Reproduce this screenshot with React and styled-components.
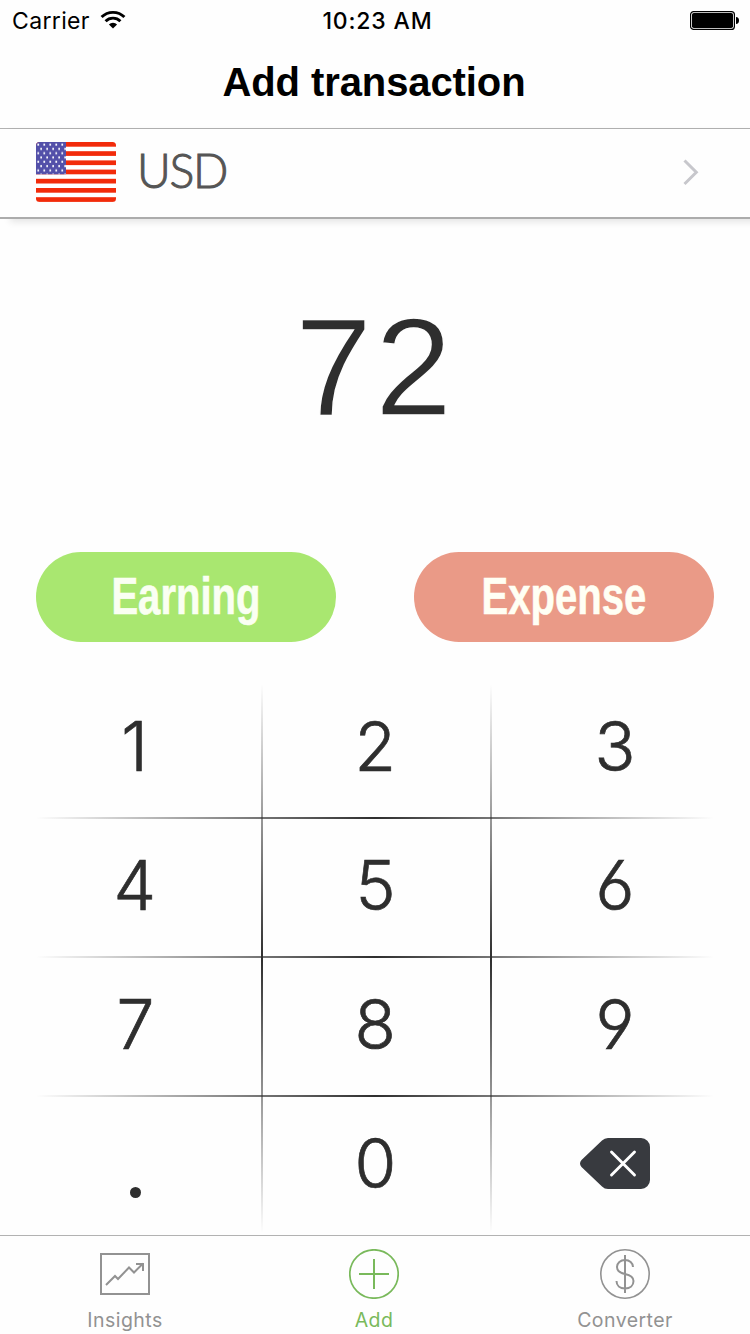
import React from "react";
import styled, { createGlobalStyle } from "styled-components";

const GlobalStyle = createGlobalStyle`
  * { box-sizing: border-box; }
  body { margin: 0; background: #fefefe; }
`;

const Screen = styled.div`
  width: 750px;
  height: 1334px;
  display: flex;
  flex-direction: column;
  overflow: hidden;
  background: #fefefe;
  font-family: Inter, "Liberation Sans", sans-serif;
`;

const StatusBar = styled.header`
  display: grid;
  grid-template-columns: 1fr auto 1fr;
  align-items: center;
  height: 40px;
  padding: 0 11px 0 12px;
  font-size: 23px;
  color: #000;
`;

const Carrier = styled.div`
  display: flex;
  align-items: center;
  gap: 10px;
  padding-top: 1px;
  letter-spacing: 0.35px;
  svg { margin-top: -2px; }
`;

const Clock = styled.time`
  font-weight: 500;
  letter-spacing: 0.85px;
  padding: 1px 0 0 4px;
`;

const Battery = styled.svg`
  justify-self: end;
`;

const NavBar = styled.div`
  height: 89px;
  display: flex;
  align-items: center;
  justify-content: center;
  border-bottom: 1px solid #b2b2b2;
`;

const Title = styled.h1`
  margin: 0;
  padding: 0 2px 4px 0;
  font: 700 40px/48px "Liberation Sans", sans-serif;
  letter-spacing: -0.1px;
  color: #000;
`;

const CurrencyRow = styled.button`
  display: flex;
  align-items: center;
  flex: none;
  width: 100%;
  height: 90px;
  padding: 0 50px 2px 36px;
  border: 0;
  border-bottom: 2px solid #acacac;
  background: #fefefe;
  box-shadow: 10px 3px 7px rgba(0, 0, 0, 0.1);
`;

const Code = styled.span`
  flex: 1;
  padding: 0 0 5px 21px;
  text-align: left;
  font: 300 46.5px/60px Lato, sans-serif;
  letter-spacing: -1.4px;
  -webkit-text-stroke: 1px #555;
  color: #555;
`;

const Amount = styled.output`
  flex: none;
  height: 333px;
  display: flex;
  align-items: center;
  justify-content: center;
  padding-bottom: 38px;
  font: 400 138.5px/160px "Liberation Sans", sans-serif;
  letter-spacing: 3px;
  color: #2e2e2e;
  -webkit-text-stroke: 1.4px #fefefe;
`;

const Actions = styled.div`
  display: flex;
  justify-content: space-between;
  flex: none;
  height: 90px;
  padding: 0 36px;
`;

const Pill = styled.button`
  width: 300px;
  border: 0;
  border-radius: 45px;
  background: ${(p) => p.$fill};
  color: ${(p) => p.$ink};
  font: 700 51px/90px "Liberation Sans", sans-serif;
  padding: 0;
`;

const Condensed = styled.span`
  display: inline-block;
  transform: scaleX(0.785);
  -webkit-text-stroke: 0.6px currentColor;
`;

const fade = "transparent, #2e2e2e 50%, transparent";

const Keypad = styled.div`
  flex: none;
  display: grid;
  grid-template-columns: repeat(3, 240px);
  grid-template-rows: repeat(4, 139px);
  margin-top: 36px;
  padding: 0 15px;
  height: 557px;
  background-image:
    linear-gradient(90deg, ${fade}),
    linear-gradient(90deg, ${fade}),
    linear-gradient(90deg, ${fade}),
    linear-gradient(${fade}),
    linear-gradient(${fade});
  background-size: 678px 2px, 678px 2px, 678px 2px, 2px 549px, 2px 549px;
  background-position: 36px 139px, 36px 278px, 36px 417px, 261px 6px, 489.5px 6px;
  background-repeat: no-repeat;
`;

const Key = styled.button`
  display: flex;
  align-items: center;
  justify-content: center;
  border: 0;
  padding: 0 0 2px;
  background: none;
  color: #2e2e2e;
  font: 300 69px/137px Inter, sans-serif;
  font-feature-settings: "cv03", "cv04";
  -webkit-text-stroke: 0.7px #2e2e2e;
`;

const Digit = styled.span`
  transform: scaleX(0.98);
`;

const Dot = styled.span`
  width: 11px;
  height: 11px;
  margin-top: 58px;
  border-radius: 50%;
  background: #2e2e2e;
`;

const TabBar = styled.nav`
  flex: 1;
  display: grid;
  grid-template-columns: 250px 248px 254px;
  border-top: 1px solid #b2b2b2;
`;

const Tab = styled.a`
  display: flex;
  flex-direction: column;
  align-items: center;
  padding-top: 13px;
  color: ${(p) => (p.$active ? "#79b95b" : "#929292")};
  font-size: 19.5px;
  line-height: 24px;
  letter-spacing: 0.45px;
  svg { margin-bottom: 9px; }
`;

const stripes = [0, 1, 2, 3, 4, 5, 6];

function Flag() {
  return (
    <svg width="80" height="60" viewBox="0 0 80 60">
      <defs>
        <clipPath id="flag-shape"><rect width="80" height="60" rx="3.5" /></clipPath>
        <pattern id="stars" width="6" height="8.6" patternUnits="userSpaceOnUse">
          <rect x="1.4" y="1.6" width="1.7" height="2" fill="#fff" />
          <rect x="4.3" y="5.9" width="1.7" height="2" fill="#fff" />
        </pattern>
      </defs>
      <g clipPath="url(#flag-shape)">
        <rect width="80" height="60" fill="#fff" />
        {stripes.map((i) => (
          <rect key={i} y={i * 9.2} width="80" height="4.7" fill="#f22b0a" />
        ))}
        <rect width="30" height="32.3" fill="#5350a9" />
        <rect width="30" height="32.3" fill="url(#stars)" />
      </g>
    </svg>
  );
}

function Wifi() {
  return (
    <svg width="26" height="19" viewBox="0 0 26 19" fill="none" stroke="#000" strokeWidth="2.9">
      <path d="M1.6 7.1a16 16 0 0 1 22.8 0" />
      <path d="M5.6 11.2a10.5 10.5 0 0 1 14.8 0" />
      <path d="M13 18.6 8.9 14.5a5.8 5.8 0 0 1 8.2 0z" fill="#000" stroke="none" />
    </svg>
  );
}

export default function App() {
  return (
    <>
      <GlobalStyle />
      <Screen>
        <StatusBar>
          <Carrier>Carrier <Wifi /></Carrier>
          <Clock>10:23 AM</Clock>
          <Battery width="49" height="19" viewBox="0 0 49 19">
            <rect x="0.6" y="0.6" width="43.8" height="17.8" rx="3" fill="#fff" stroke="#000" strokeWidth="1.2" />
            <rect x="2" y="2" width="41" height="15" rx="1.8" />
            <path d="M46 6c2 0 3 1.5 3 3.5S48 13 46 13z" />
          </Battery>
        </StatusBar>
        <NavBar><Title>Add transaction</Title></NavBar>
        <CurrencyRow>
          <Flag />
          <Code>USD</Code>
          <svg width="18" height="28" viewBox="0 0 18 28" fill="none" stroke="#c7c7cc" strokeWidth="3">
            <path d="m2.5 2.5 11.8 11.8L2.5 26" />
          </svg>
        </CurrencyRow>
        <Amount>72</Amount>
        <Actions>
          <Pill $fill="#a9e770" $ink="#fafff2"><Condensed>Earning</Condensed></Pill>
          <Pill $fill="#ea9a87" $ink="#fffff4"><Condensed>Expense</Condensed></Pill>
        </Actions>
        <Keypad>
          {[1, 2, 3, 4, 5, 6, 7, 8, 9].map((n) => <Key key={n}><Digit>{n}</Digit></Key>)}
          <Key aria-label="Decimal point"><Dot /></Key>
          <Key><Digit>0</Digit></Key>
          <Key aria-label="Erase">
            <svg width="70" height="51" viewBox="0 0 70 51">
              <path d="M28 0h33a9 9 0 0 1 9 9v33a9 9 0 0 1-9 9H28q-3.500 0-6-2.500L1.500 29q-3-3.500 0-7L22 2.500Q24.500 0 28 0z" fill="#383a3f" />
              <path d="m31.500 14 23 23m0-23-23 23" stroke="#fff" strokeWidth="2.900" strokeLinecap="round" />
            </svg>
          </Key>
        </Keypad>
        <TabBar>
          <Tab>
            <svg width="50" height="50" viewBox="0 0 50 50" fill="none" stroke="currentColor" strokeWidth="2">
              <rect x="1" y="5" width="48" height="40" />
              <path d="M6 36l9-9 3 3L29 18.500l5 5L43 14.500M36 15h7v7" />
            </svg>
            Insights
          </Tab>
          <Tab $active>
            <svg width="50" height="50" viewBox="0 0 50 50" fill="none" stroke="currentColor" strokeWidth="2">
              <circle cx="25" cy="25" r="24.200" strokeWidth="1.700" />
              <path d="M25 10v30M10 25h30" />
            </svg>
            Add
          </Tab>
          <Tab>
            <svg width="50" height="50" viewBox="0 0 50 50" fill="none" stroke="currentColor" strokeWidth="2">
              <circle cx="25" cy="25" r="24.200" strokeWidth="1.600" />
              <path d="M25 6v38M33 18c0-4-3.500-7-8-7s-8 3-8 7c0 4.500 3.500 6 8 7s8.500 2.500 8.500 7-3.500 7.500-8.500 7.500-8.500-3-8.500-7.500" />
            </svg>
            Converter
          </Tab>
        </TabBar>
      </Screen>
    </>
  );
}
